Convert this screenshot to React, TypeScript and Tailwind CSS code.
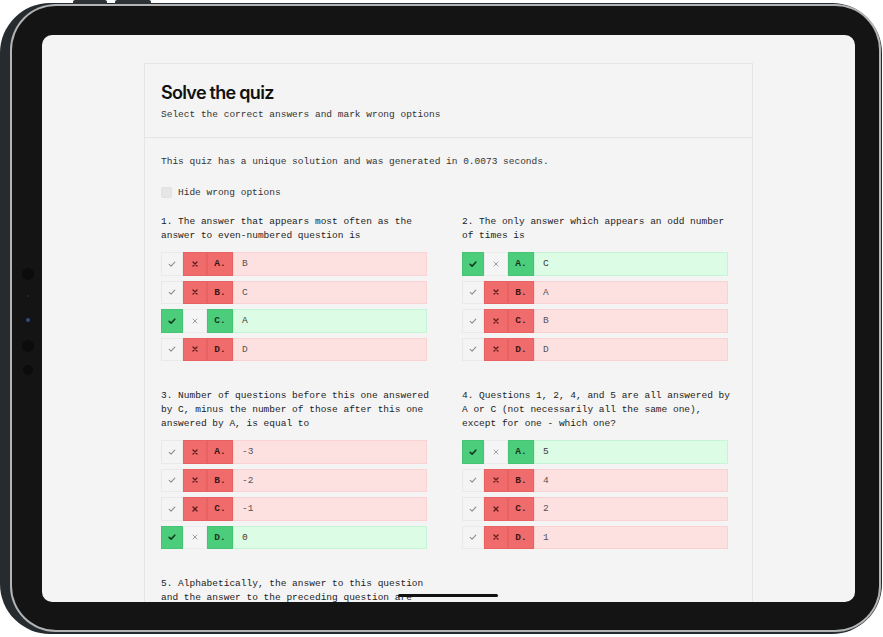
import React, { useState } from 'react';

type Option = { letter: string; text: string; correct: boolean };
type Question = { title: string; options: Option[] };

const questions: Question[] = [
  {
    title: '1. The answer that appears most often as the answer to even-numbered question is',
    options: [
      { letter: 'A.', text: 'B', correct: false },
      { letter: 'B.', text: 'C', correct: false },
      { letter: 'C.', text: 'A', correct: true },
      { letter: 'D.', text: 'D', correct: false },
    ],
  },
  {
    title: '2. The only answer which appears an odd number of times is',
    options: [
      { letter: 'A.', text: 'C', correct: true },
      { letter: 'B.', text: 'A', correct: false },
      { letter: 'C.', text: 'B', correct: false },
      { letter: 'D.', text: 'D', correct: false },
    ],
  },
  {
    title:
      '3. Number of questions before this one answered by C, minus the number of those after this one answered by A, is equal to',
    options: [
      { letter: 'A.', text: '-3', correct: false },
      { letter: 'B.', text: '-2', correct: false },
      { letter: 'C.', text: '-1', correct: false },
      { letter: 'D.', text: '0', correct: true },
    ],
  },
  {
    title:
      '4. Questions 1, 2, 4, and 5 are all answered by A or C (not necessarily all the same one), except for one - which one?',
    options: [
      { letter: 'A.', text: '5', correct: true },
      { letter: 'B.', text: '4', correct: false },
      { letter: 'C.', text: '2', correct: false },
      { letter: 'D.', text: '1', correct: false },
    ],
  },
  {
    // options of this one sit below the fold of the screen
    title:
      '5. Alphabetically, the answer to this question and the answer to the preceding question are',
    options: [],
  },
];

const CheckIcon = ({ color, width }: { color: string; width: number }) => (
  <svg width="10" height="10" viewBox="0 0 10 10" fill="none">
    <path d="M2.2 5.3 L4.1 7.1 L7.8 3.2" stroke={color} strokeWidth={width} strokeLinecap="round" strokeLinejoin="round" />
  </svg>
);

const XIcon = ({ color, width }: { color: string; width: number }) => (
  <svg width="10" height="10" viewBox="0 0 10 10" fill="none">
    <path d="M3 3 L7 7 M7 3 L3 7" stroke={color} strokeWidth={width} strokeLinecap="round" />
  </svg>
);

function OptionRow({ option }: { option: Option }) {
  const ok = option.correct;
  return (
    <div className="flex h-[23.5px] w-[266px]">
      <div
        className={`flex w-[22px] items-center justify-center border ${
          ok ? 'border-[#45c475] bg-[#4ccd7c]' : 'border-[#e9e9e9] bg-[#f4f4f4]'
        }`}
      >
        <CheckIcon color={ok ? '#0f3a20' : '#8d8d8d'} width={ok ? 1.6 : 1.1} />
      </div>
      <div
        className={`flex w-[24px] items-center justify-center border ${
          ok ? 'border-[#ececec] bg-[#f5f5f5]' : 'border-[#e86262] bg-[#f06b6b]'
        }`}
      >
        <XIcon color={ok ? '#a0a0a0' : '#5a1c1c'} width={ok ? 1 : 1.3} />
      </div>
      <div
        className={`flex w-[26px] items-center justify-center border pt-[1px] font-bold ${
          ok ? 'border-[#45c475] bg-[#4ccd7c] text-[#16351f]' : 'border-[#e86262] bg-[#f06b6b] text-[#3a1616]'
        }`}
      >
        {option.letter}
      </div>
      <div
        className={`flex flex-1 items-center border pl-[8px] pt-[1px] ${
          ok ? 'border-[#c6f5d5] bg-[#dcfce6] text-[#3a3a3a]' : 'border-[#fbd2d2] bg-[#fde1e1] text-[#555]'
        }`}
      >
        {option.text}
      </div>
    </div>
  );
}

export default function App() {
  const [hideWrong, setHideWrong] = useState(false);

  return (
    <div className="relative h-[637px] w-[883px] overflow-hidden bg-white">
      {/* top buttons */}
      <div className="absolute left-[73px] top-0 h-[4px] w-[34px] rounded-t-[2px] bg-[#2c3236]" />
      <div className="absolute left-[115px] top-0 h-[4px] w-[36px] rounded-t-[2px] bg-[#2c3236]" />

      <div className="mt-[3px] h-[631px] w-[882px]">
        <div className="h-full rounded-[50px] bg-[#262b2f] pb-[2px] pl-[10px] pr-[1px] pt-[1px]">
          <div className="h-full rounded-[46px] bg-[#b2b4b6] p-[2px]">
            <div className="relative h-full rounded-[44px] bg-[#141414] pb-[28px] pl-[30px] pr-[24px] pt-[29px]">
              {/* camera and sensors */}
              <div className="absolute left-[10px] top-[262px] h-[12px] w-[12px] rounded-full bg-[#0c0c0c]" />
              <div className="absolute left-[15px] top-[289px] h-[2px] w-[2px] rounded-full bg-[#2a2a2a]" />
              <div className="absolute left-[14px] top-[312px] h-[4px] w-[4px] rounded-full bg-[#2f4d8c]" />
              <div className="absolute left-[10px] top-[334px] h-[12px] w-[12px] rounded-full bg-[#0c0c0c]" />
              <div className="absolute left-[11px] top-[359px] h-[10px] w-[10px] rounded-full bg-[#0c0c0c]" />

              <div className="relative h-full overflow-hidden rounded-[10px] bg-[#f4f4f4]">
                <div
                  className="ml-[102px] mt-[28px] w-[609px] border border-[#e5e5e5] text-[9.5px] text-[#333]"
                  style={{ fontFamily: '"Liberation Mono", "DejaVu Sans Mono", monospace' }}
                >
                  <div className="border-b border-[#e5e5e5] px-4 pb-[15px] pt-[18px]">
                    <h1
                      className="text-[18px] font-semibold leading-[22px] tracking-[-0.04em] text-[#111]"
                      style={{ fontFamily: 'Inter, "Noto Sans", sans-serif' }}
                    >
                      Solve the quiz
                    </h1>
                    <p className="mt-[4px] leading-[14px] text-[#333]">Select the correct answers and mark wrong options</p>
                  </div>

                  <div className="px-4 pt-[17px]">
                    <p className="leading-[14px]">
                      This quiz has a unique solution and was generated in 0.0073 seconds.
                    </p>
                    <label className="mt-[16px] flex items-center gap-[6px] leading-[13px]">
                      <span
                        onClick={() => setHideWrong(!hideWrong)}
                        className="h-[11px] w-[11px] rounded-[2px] border border-[#e2e2e2] bg-[#e6e6e6]"
                      />
                      <span className="pt-[1px]">Hide wrong options</span>
                    </label>

                    <div className="mt-[16px] grid w-[569px] grid-cols-[268px_268px] gap-x-[33px] gap-y-[28px]">
                      {questions.map((q, i) => (
                        <div key={i}>
                          <p className="leading-[14px] text-[#1c1c1c]">{q.title}</p>
                          {q.options.length > 0 && (
                            <div className="mt-[9px] flex flex-col gap-[5px]">
                              {q.options
                                .filter((o) => !hideWrong || o.correct)
                                .map((o) => (
                                  <OptionRow key={o.letter} option={o} />
                                ))}
                            </div>
                          )}
                        </div>
                      ))}
                    </div>
                  </div>
                </div>

                {/* home indicator */}
                <div className="absolute bottom-[5px] left-[356px] h-[3px] w-[100px] rounded-full bg-[#111]" />
              </div>
            </div>
          </div>
        </div>
      </div>
    </div>
  );
}
